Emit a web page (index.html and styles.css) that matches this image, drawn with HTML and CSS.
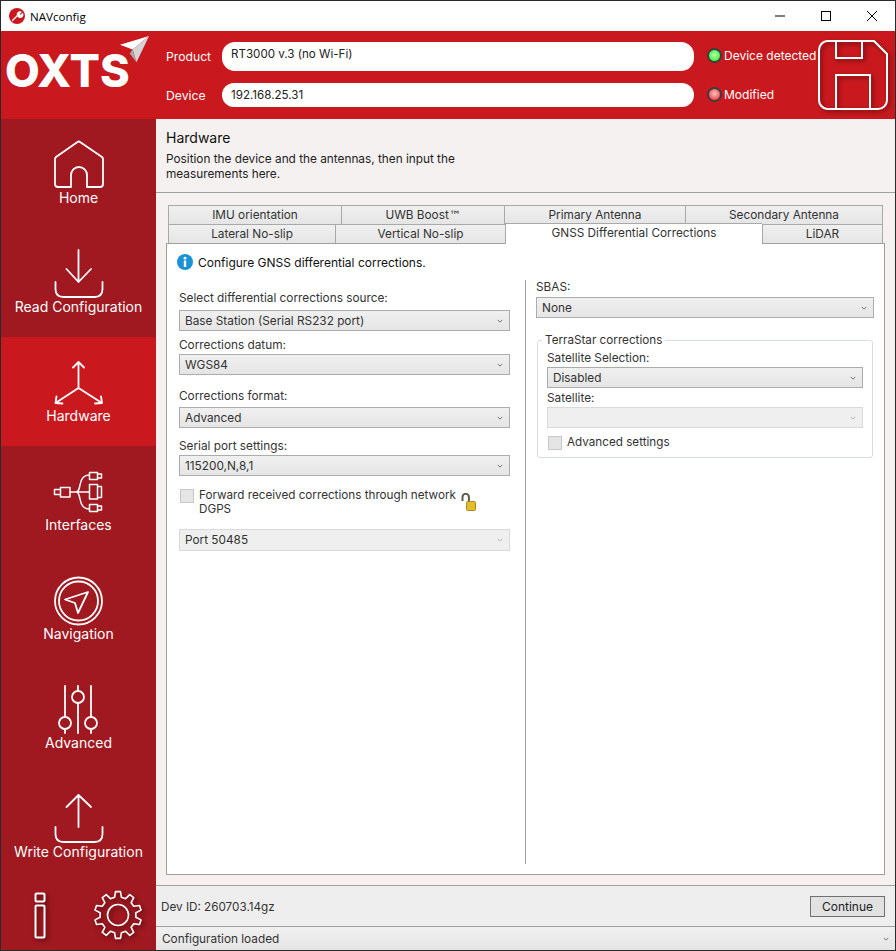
FILE: index.html
```html
<!DOCTYPE html>
<html lang="en">
<head>
  <meta charset="UTF-8" />
  <title>NAVconfig</title>
  <link rel="stylesheet" href="styles.css">
</head>
<body>
  <svg class="defs">
    <symbol id="chevron" viewBox="0 0 8 5">
      <path d="M1 1l3 3 3-3" fill="none" stroke="currentColor" stroke-width="1.200" />
    </symbol>
  </svg>

  <div class="window">
    <div class="titlebar">
      <svg class="app-icon" viewBox="0 0 16 16">
        <circle cx="8" cy="8" r="8" fill="#c9191e" />
        <path d="M3.500 12.500l5-5M8.500 7.500a2.600 2.600 0 0 1 3.400-3.400l-1.700 1.700.3 1.400 1.400.3 1.700-1.700a2.600 2.600 0 0 1-3.400 3.400z" fill="#fff" stroke="#fff" stroke-width="1.300" stroke-linecap="round" stroke-linejoin="round" />
      </svg>
      <span class="app-name">NAVconfig</span>
      <div class="win-controls">
        <svg viewBox="0 0 46 30"><path d="M18 15h10" stroke="#000" fill="none" /></svg>
        <svg viewBox="0 0 46 30"><rect x="18.500" y="10.500" width="9" height="9" stroke="#000" fill="none" /></svg>
        <svg viewBox="0 0 46 30"><path d="M18 10l10 10M28 10L18 20" stroke="#000" fill="none" /></svg>
      </div>
    </div>

    <header class="topbar">
      <div class="logo">
        <span class="logo-text">OXTS</span>
        <svg class="logo-plane" viewBox="0 0 32 32">
          <polygon points="0,9 30,0 13,14" fill="#fff" />
          <polygon points="30,0 13,14 17,27" fill="#d4d4d4" />
          <polygon points="13,14 17,27 10,18" fill="#a9a9a9" />
        </svg>
      </div>
      <div class="fields">
        <div class="field-row row-product">
          <span class="field-label">Product</span>
          <div class="pill pill-product">RT3000 v.3 (no Wi-Fi)</div>
        </div>
        <div class="field-row row-device">
          <span class="field-label">Device</span>
          <div class="pill pill-device">192.168.25.31</div>
        </div>
      </div>
      <div class="leds">
        <div class="led-row"><span class="led led-green"></span>Device detected</div>
        <div class="led-row"><span class="led led-red"></span>Modified</div>
      </div>
      <svg class="save-icon" viewBox="0 0 70 70">
        <path d="M9 1h47l13 13v46a9 9 0 0 1-9 9H9a9 9 0 0 1-8-9V10a9 9 0 0 1 8-9z" />
        <path d="M18 1v17h26V1M18 69V35h34v34" />
      </svg>
    </header>

    <div class="body-row">
      <nav class="sidebar">
        <a class="nav-item">
          <svg viewBox="0 0 60 56"><path d="M23 52v-12a8 8 0 0 1 16 0v12h13a3 3 0 0 0 3-3V24q0-1-1-2L32 7q-1.200-1-2.500 0L8 22q-1 1-1 2v25a3 3 0 0 0 3 3z" /></svg>
          <span>Home</span>
        </a>
        <a class="nav-item">
          <svg viewBox="0 0 60 56"><path d="M30.500 6v32M18.500 25l12 13 12.500-13M7.500 38v7q0 8 8 8h31q8 0 8-8v-7" /></svg>
          <span>Read Configuration</span>
        </a>
        <a class="nav-item active">
          <svg viewBox="0 0 60 56"><path d="M30.500 35V9M25 14.500L30.500 9l5.500 5.500M30.500 35L7.500 50M8.500 43.500L7.500 50l7 .5M30.500 35L54 50M53 43.500L54 50l-7 .5" /></svg>
          <span>Hardware</span>
        </a>
        <a class="nav-item">
          <svg class="thin" viewBox="0 0 60 56">
            <path d="M6.500 27.500h6v5h-6zM12.500 25.500h9.500v9.500h-9.500zM22 30h19M28 30c3 0 3-3 4-7 1-6 4-10 9-10M28 30c3 0 3 3 4 7 1 6 4 10 9 10" />
            <path d="M41.500 10.500h8v7h-8zM49.500 12h4v4h-4zM41.500 22.500h8v14.500h-8zM49.500 24.500h4v11h-4zM41.500 42.500h8v7h-8zM49.500 44h4v4h-4z" />
          </svg>
          <span>Interfaces</span>
        </a>
        <a class="nav-item">
          <svg viewBox="0 0 60 56">
            <circle cx="30.500" cy="30" r="23.500" />
            <circle cx="30.500" cy="30" r="19.500" />
            <path d="M40 21l-23 7.500 10 3.500 3 10z" />
          </svg>
          <span>Navigation</span>
        </a>
        <a class="nav-item">
          <svg viewBox="0 0 60 56">
            <path d="M17 6v31M17 49v4M30 6v5M30 23v30M43 6v31M43 49v4" />
            <circle cx="17" cy="43" r="6" />
            <circle cx="30" cy="17" r="6" />
            <circle cx="43" cy="43" r="6" />
          </svg>
          <span>Advanced</span>
        </a>
        <a class="nav-item">
          <svg viewBox="0 0 60 56"><path d="M30.500 6v32M18.500 18l12-12 12.500 12M7.500 38v7q0 8 8 8h31q8 0 8-8v-7" /></svg>
          <span>Write Configuration</span>
        </a>
        <div class="side-tools">
          <svg class="tool-info" viewBox="0 0 12 48">
            <rect x="1.500" y="1.500" width="9" height="8" rx="1" />
            <rect x="1.500" y="13.500" width="9" height="32" rx="1" />
          </svg>
          <svg class="tool-gear" viewBox="-26 -26 52 52">
            <path d="M-3.430-17.670L-2.460-23.370 2.460-23.370 3.430-17.670 7.610-16.310 11.750-20.350 15.720-17.460 13.160-12.280 15.740-8.730 21.470-9.560 22.990-4.890 17.870-2.190 17.870 2.190 22.990 4.890 21.470 9.560 15.740 8.730 13.160 12.280 15.720 17.460 11.750 20.350 7.610 16.310 3.430 17.670 2.460 23.370-2.460 23.370-3.430 17.670-7.610 16.310-11.750 20.350-15.720 17.460-13.160 12.280-15.740 8.730-21.470 9.560-22.990 4.890-17.870 2.190-17.870-2.190-22.990-4.890-21.470-9.560-15.740-8.730-13.160-12.280-15.720-17.460-11.750-20.350-7.610-16.310z" />
            <circle r="10.500" />
          </svg>
        </div>
      </nav>

      <main class="main">
        <div class="page-head">
          <h1>Hardware</h1>
          <p>Position the device and the antennas, then input the<br>measurements here.</p>
        </div>

        <div class="content">
          <div class="tabs">
            <div class="tab-row">
              <div class="tab w173">IMU orientation</div>
              <div class="tab w163">UWB Boost<span class="tm">™</span></div>
              <div class="tab w181">Primary Antenna</div>
              <div class="tab w198">Secondary Antenna</div>
            </div>
            <div class="tab-row">
              <div class="tab w167">Lateral No-slip</div>
              <div class="tab w170">Vertical No-slip</div>
              <div class="tab tab-active w257">GNSS Differential Corrections</div>
              <div class="tab w121">LiDAR</div>
            </div>
          </div>

          <section class="panel">
            <div class="info-line">
              <svg class="info-icon" viewBox="0 0 16 16">
                <circle cx="8" cy="8" r="8" fill="#1b92d8" />
                <rect x="6.800" y="6.500" width="2.400" height="6.500" fill="#fff" />
                <circle cx="8" cy="4.200" r="1.400" fill="#fff" />
              </svg>
              Configure GNSS differential corrections.
            </div>

            <div class="columns">
              <div class="col-left">
                <label>Select differential corrections source:</label>
                <div class="select mt-4"><span>Base Station (Serial RS232 port)</span><svg><use href="#chevron" /></svg></div>
                <label class="mt-6">Corrections datum:</label>
                <div class="select mt-1"><span>WGS84</span><svg><use href="#chevron" /></svg></div>
                <label class="mt-13">Corrections format:</label>
                <div class="select mt-3"><span>Advanced</span><svg><use href="#chevron" /></svg></div>
                <label class="mt-10">Serial port settings:</label>
                <div class="select mt-1"><span>115200,N,8,1</span><svg><use href="#chevron" /></svg></div>
                <div class="check-row mt-12">
                  <span class="checkbox"></span>
                  <span class="check-text">Forward received corrections through network<br>DGPS</span>
                  <svg class="lock" viewBox="0 0 15 18">
                    <path d="M1.500 8V4a3.200 3.200 0 0 1 6.400 0v4" fill="none" stroke="#5f5a52" stroke-width="2" />
                    <rect x="5.500" y="8.500" width="9" height="9" rx="1" fill="#e3bb2c" stroke="#a88a1e" />
                  </svg>
                </div>
                <div class="select disabled tall mt-13"><span>Port 50485</span><svg><use href="#chevron" /></svg></div>
              </div>

              <div class="col-right">
                <label>SBAS:</label>
                <div class="select wide mt-3"><span>None</span><svg><use href="#chevron" /></svg></div>
                <fieldset class="group">
                  <legend>TerraStar corrections</legend>
                  <label class="mt-3">Satellite Selection:</label>
                  <div class="select mt-2"><span>Disabled</span><svg><use href="#chevron" /></svg></div>
                  <label class="mt-3">Satellite:</label>
                  <div class="select disabled mt-2"><span></span><svg><use href="#chevron" /></svg></div>
                  <div class="check-row mt-7">
                    <span class="checkbox"></span>
                    <span class="check-text">Advanced settings</span>
                  </div>
                </fieldset>
              </div>
            </div>
          </section>
        </div>

        <div class="footer">
          <span>Dev ID: 260703.14gz</span>
          <button>Continue</button>
        </div>
        <div class="statusbar">
          <span>Configuration loaded</span>
          <svg><use href="#chevron" /></svg>
        </div>
      </main>
    </div>
  </div>
</body>
</html>
```

FILE: styles.css
```css
* {
  box-sizing: border-box;
}
body {
  margin: 0;
  font-family: 'Inter', sans-serif;
  font-size: 12px;
  color: #222;
  background: #333;
}
.defs {
  display: none;
}
.window {
  width: 896px;
  height: 951px;
  border: 1px solid #2a2a2a;
  display: flex;
  flex-direction: column;
  overflow: hidden;
}

/* title bar */
.titlebar {
  height: 30px;
  flex: none;
  background: #fff;
  display: flex;
  align-items: center;
  padding-left: 8px;
}
.app-icon {
  width: 16px;
  height: 16px;
}
.app-name {
  margin-left: 5px;
  font-family: 'Open Sans', sans-serif;
  font-size: 11.600px;
  color: #000;
}
.win-controls {
  margin-left: auto;
  display: flex;
}
.win-controls svg {
  width: 46px;
  height: 30px;
}

/* red header */
.topbar {
  height: 88px;
  flex: none;
  background: #c9191e;
  color: #fff;
  display: flex;
}
.logo {
  width: 165px;
  flex: none;
  position: relative;
  padding: 14px 0 0 4px;
}
.logo-text {
  font-size: 45px;
  font-weight: 800;
  line-height: 52px;
}
.logo-plane {
  position: absolute;
  left: 119px;
  top: 5px;
  width: 31px;
  height: 31px;
}
.fields {
  width: 528px;
  flex: none;
}
.field-row {
  display: flex;
  align-items: center;
}
.row-product {
  margin-top: 11px;
}
.row-device {
  margin-top: 12px;
}
.field-label {
  width: 56px;
  flex: none;
  font-size: 12.200px;
}
.pill {
  flex: 1;
  background: #fff;
  color: #222;
  font-size: 11.600px;
  border-radius: 13px;
  padding-left: 9px;
}
.pill-product {
  height: 29px;
  padding-top: 5px;
}
.pill-device {
  height: 24px;
  line-height: 24px;
}
.leds {
  width: 124px;
  flex: none;
  padding-top: 16px;
}
.led-row {
  display: flex;
  align-items: center;
  height: 16px;
  margin-bottom: 23px;
  margin-left: 13px;
  white-space: nowrap;
}
.led {
  width: 15px;
  height: 15px;
  flex: none;
  border-radius: 50%;
  border: 2px solid #3d3d3d;
  margin-right: 2px;
}
.led-green {
  background: radial-gradient(circle at 50% 45%, #b8ffae, #2ff02f 85%);
}
.led-red {
  background: radial-gradient(circle at 50% 40%, #ffc0c0, #f03c3c 85%);
}
.save-icon {
  width: 70px;
  height: 70px;
  margin-top: 9px;
  fill: none;
  stroke: #fff;
  stroke-width: 2;
  filter: drop-shadow(2px 2px 2px rgba(0, 0, 0, 0.5));
}

/* sidebar */
.body-row {
  flex: 1;
  display: flex;
  min-height: 0;
}
.sidebar {
  width: 155px;
  flex: none;
  background: #a01820;
  color: #fff;
  display: flex;
  flex-direction: column;
}
.nav-item {
  height: 109px;
  flex: none;
  padding-top: 16px;
  display: flex;
  flex-direction: column;
  align-items: center;
  font-size: 14px;
  line-height: 16px;
  white-space: nowrap;
}
.nav-item.active {
  background: #c9191e;
}
.nav-item svg {
  width: 60px;
  height: 56px;
  margin-right: 1px;
  fill: #a01820;
  stroke: #fff;
  stroke-width: 1.800;
  stroke-linecap: round;
  stroke-linejoin: round;
  overflow: visible;
}
.nav-item:not(:has(circle)) svg {
  fill: none;
}
.nav-item svg.thin {
  stroke-width: 1.500;
  stroke-linecap: butt;
}
.nav-item span {
  margin-top: -1px;
}
.side-tools {
  display: flex;
  padding: 10px 0 0 33px;
}
.tool-info {
  width: 12px;
  height: 48px;
  fill: none;
  stroke: #fff;
  stroke-width: 2;
  filter: drop-shadow(2px 2px 2px rgba(0, 0, 0, 0.5));
}
.tool-gear {
  width: 52px;
  height: 52px;
  margin: -3px 0 0 46px;
  fill: none;
  stroke: #fff;
  stroke-width: 1.600;
  stroke-linejoin: round;
  filter: drop-shadow(2px 2px 2px rgba(0, 0, 0, 0.5));
}

/* main area */
.main {
  flex: 1;
  min-width: 0;
  display: flex;
  flex-direction: column;
  background: #f5f1f0;
}
.page-head {
  height: 74px;
  flex: none;
  border-bottom: 1px solid #a0a0a0;
  padding: 10px 10px 0;
}
.page-head h1 {
  margin: 0;
  font-size: 14px;
  font-weight: 400;
  line-height: 17px;
  color: #111;
}
.page-head p {
  margin: 6px 0 0;
  font-size: 11.800px;
  line-height: 15px;
}
.content {
  flex: 1;
  padding: 12px 10px 10px;
  display: flex;
  flex-direction: column;
  border-bottom: 1px solid #a0a0a0;
}

/* tabs */
.tabs {
  padding-left: 2px;
  flex: none;
}
.tab-row {
  display: flex;
  height: 19px;
}
.tab {
  height: 19px;
  text-align: center;
  font-size: 11.800px;
  line-height: 18px;
  color: #333;
  background: linear-gradient(#f0f0f0, #e5e5e5);
  border: 1px solid #a9a9a9;
  border-bottom: none;
  border-right: none;
}
.tab:last-child {
  border-right: 1px solid #a9a9a9;
}
.tab-active {
  height: 21px;
  margin-top: -1px;
  background: #fff;
  position: relative;
  z-index: 1;
}
.tm {
  font-family: 'DejaVu Sans', sans-serif;
}
.w173 { width: 173px; }
.w163 { width: 163px; }
.w181 { width: 181px; }
.w198 { width: 198px; }
.w167 { width: 167px; }
.w170 { width: 170px; }
.w257 { width: 257px; }
.w121 { width: 121px; }

/* panel */
.panel {
  flex: 1;
  background: #fff;
  border: 1px solid #a0a0a0;
}
.info-line {
  display: flex;
  align-items: center;
  height: 16px;
  margin-top: 10px;
  padding-left: 10px;
  font-size: 12px;
  color: #111;
}
.info-icon {
  width: 16px;
  height: 16px;
  margin-right: 5px;
}
.columns {
  display: flex;
  margin-top: 10px;
  height: 584px;
}
.col-left {
  width: 359px;
  flex: none;
  padding: 10px 15px 0 12px;
  border-right: 1px solid #a0a0a0;
}
.col-right {
  flex: 1;
  padding-left: 10px;
}
label {
  display: block;
  font-size: 11.800px;
  line-height: 16px;
  color: #333;
}
.col-right label {
  line-height: 14px;
}
.select {
  height: 21px;
  border: 1px solid #acacac;
  background: linear-gradient(#f0f0f0, #e5e5e5);
  display: flex;
  align-items: center;
  justify-content: space-between;
  padding: 0 6px 0 5px;
  font-size: 11.800px;
  color: #333;
}
.select svg,
.statusbar svg {
  width: 6px;
  height: 4px;
  color: #666;
}
.select.disabled {
  background: #efefef;
  border-color: #d9d9d9;
}
.select.disabled svg {
  color: #aaa;
}
.select.tall {
  height: 22px;
}
.select.wide {
  width: 338px;
}
.check-row {
  display: flex;
  align-items: flex-start;
  font-size: 11.700px;
  line-height: 14px;
  color: #333;
}
.checkbox {
  width: 14px;
  height: 14px;
  flex: none;
  background: #e5e5e5;
  border: 1px solid #c8c8c8;
  margin: 1px 5px 0 1px;
}
.lock {
  width: 15px;
  height: 18px;
  margin: 5px 0 0 5px;
}
.group {
  width: 336px;
  height: 126px;
  margin: 14px 0 0 1px;
  padding: 0 9px;
  border: 1px solid #d8dde3;
  border-radius: 3px;
}
.group legend {
  font-size: 11.700px;
  line-height: 16px;
  color: #333;
  margin-left: -5px;
  padding: 0 3px;
}
.mt-1 { margin-top: 1px; }
.mt-2 { margin-top: 2px; }
.mt-3 { margin-top: 3px; }
.mt-4 { margin-top: 4px; }
.mt-6 { margin-top: 6px; }
.mt-7 { margin-top: 7px; }
.mt-10 { margin-top: 10px; }
.mt-12 { margin-top: 12px; }
.mt-13 { margin-top: 13px; }

/* footer */
.footer {
  height: 41px;
  flex: none;
  background: #eee;
  display: flex;
  align-items: center;
  justify-content: space-between;
  padding: 1px 10px 0 5px;
  font-size: 11.700px;
  color: #333;
  border-bottom: 1px solid #a0a0a0;
}
.footer button {
  width: 75px;
  height: 21px;
  padding: 0;
  border: 1px solid #707070;
  background: #e1e1e1;
  font-family: inherit;
  font-size: 12px;
  color: #222;
}
.statusbar {
  height: 23px;
  flex: none;
  display: flex;
  align-items: center;
  justify-content: space-between;
  padding: 0 6px;
  font-size: 11.800px;
  color: #333;
  background: linear-gradient(#f0f0f0, #e5e5e5);
}
```
